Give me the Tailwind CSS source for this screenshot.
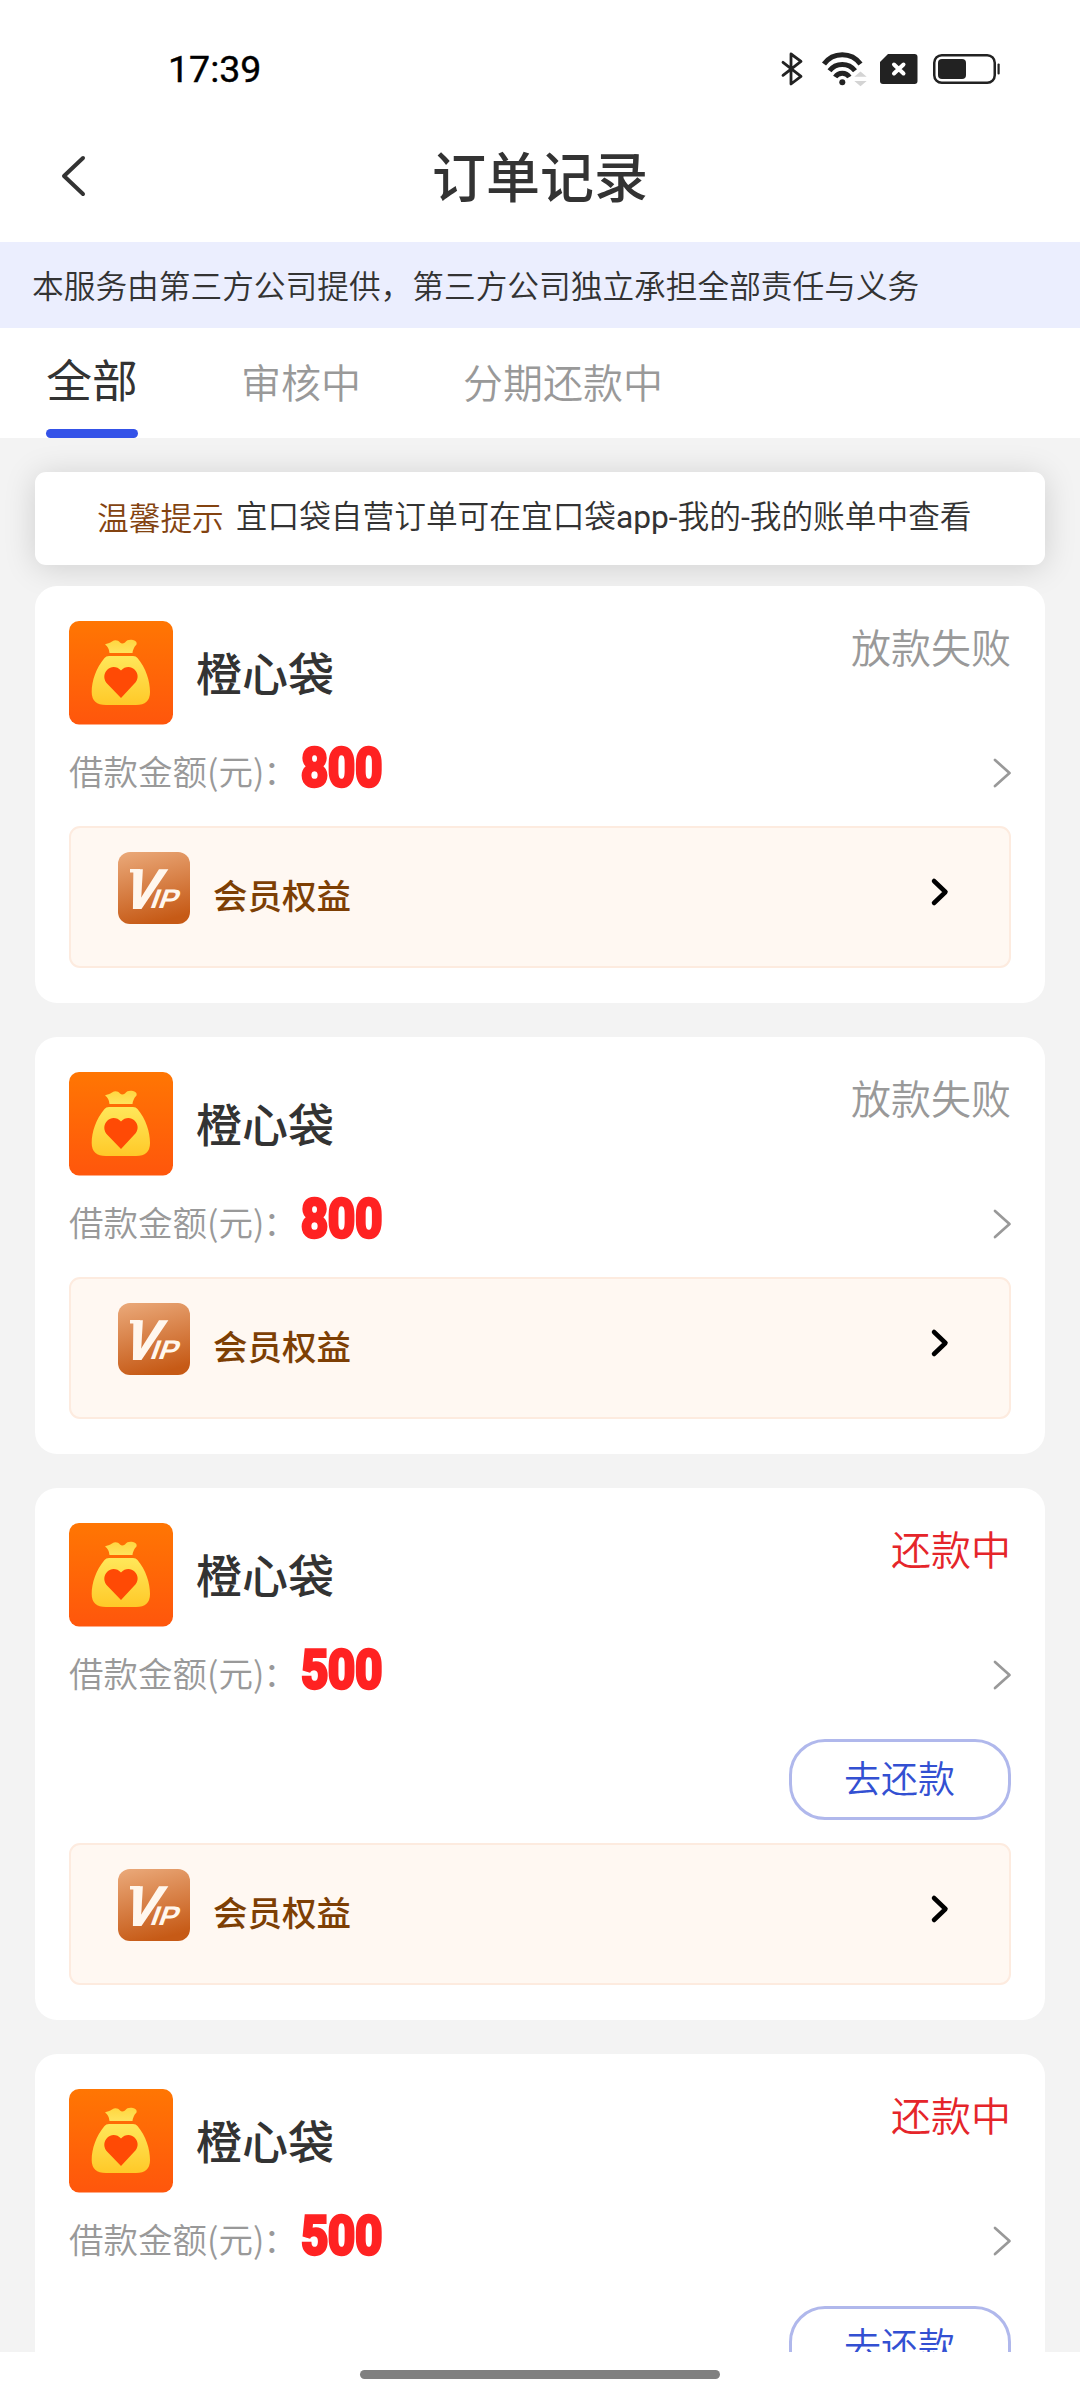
<!DOCTYPE html>
<html lang="zh-CN">
<head>
<meta charset="utf-8">
<title>订单记录</title>
<script src="https://cdn.jsdelivr.net/npm/@tailwindcss/browser@4"></script>
</head>
<body class="bg-white">
<svg class="absolute w-0 h-0" aria-hidden="true">
  <defs>
    <linearGradient id="bg-app" x1="0" y1="0" x2="0" y2="1"><stop offset="0" stop-color="#ff7603"/><stop offset="1" stop-color="#ff560c"/></linearGradient>
    <linearGradient id="bg-bag" x1="0" y1="0" x2="0" y2="1"><stop offset="0" stop-color="#ffe75a"/><stop offset="1" stop-color="#ffc928"/></linearGradient>
    <linearGradient id="bg-knot" x1="0" y1="0" x2="0" y2="1"><stop offset="0" stop-color="#ffd640"/><stop offset="1" stop-color="#ffe35c"/></linearGradient>
    <linearGradient id="bg-vip" x1="0.2" y1="0" x2="0.45" y2="1"><stop offset="0" stop-color="#e9a676"/><stop offset="1" stop-color="#c65a16"/></linearGradient>
    <symbol id="bag" viewBox="0 0 104 104">
      <rect width="104" height="103.500" rx="10" fill="url(#bg-app)"/>
      <path d="M36 23.5C38 22.5 41 22 43 20.5C46 18.500 49 19 51 21.500Q53 23.500 56 21.500C58 18.500 61 18.500 64 19Q68.500 20 67.500 23.500Q64 27 63.500 32H40.500Q40 26 36 23.5Z" fill="url(#bg-knot)"/>
      <path d="M40 35H64Q67 35 68.500 37C77 47 81 60 81 71Q81 84 67 84H37Q22.700 84 22.700 71C22.700 60 27 47 35.500 37Q37 35 40 35Z" fill="url(#bg-bag)"/>
      <path d="M52 49.500C48 45 42 45 38.500 48.500C34 53 34.500 59 38.500 63L52 77L65 63C69.500 59 70 53 65.500 48.500C62 45 56 45 52 49.500Z" fill="#ff4a05"/>
    </symbol>
    <symbol id="vip" viewBox="0 0 72 72">
      <rect width="72" height="72" rx="12" fill="url(#bg-vip)"/>
      <path d="M12 17H22V20.500H12Z" fill="#fff7ee"/>
      <g font-family="Liberation Sans" font-weight="700" fill="#fff7ee">
        <text transform="translate(3 55.500) skewX(-19)" font-size="55" textLength="33" lengthAdjust="spacingAndGlyphs" stroke="#fff7ee" stroke-width="2">V</text>
        <text transform="translate(31 55.500) skewX(-20)" font-size="27" textLength="27" lengthAdjust="spacingAndGlyphs">IP</text>
      </g>
    </symbol>
    <symbol id="next" viewBox="0 0 20 32"><path d="M3 3L17.500 16L3 29" fill="none" stroke="#999" stroke-width="2.700" stroke-linecap="round" stroke-linejoin="round"/></symbol>
    <symbol id="next-bold" viewBox="0 0 20 32"><path d="M4 5L15.500 16L4 27" fill="none" stroke="#000" stroke-width="4.500" stroke-linecap="round" stroke-linejoin="round"/></symbol>
  </defs>
</svg>
<div class="w-[1080px] h-[2400px] flex flex-col overflow-hidden bg-white text-[#333] font-['Noto_Sans_CJK_SC',sans-serif]">
  <div class="h-[138px] shrink-0 flex items-center justify-between pl-[168px] pr-[80px]">
    <div class="font-['Roboto',sans-serif] font-normal text-[37.500px] leading-none text-black pt-px [-webkit-text-stroke:0.400px_#000]">17:39</div>
    <div class="flex items-center">
      <svg class="w-[22px] h-[34px] mr-[17px]" viewBox="0 0 22 34" fill="none" stroke="#222" stroke-width="2.800" stroke-linejoin="round" stroke-linecap="round"><path d="M2 10.300L20 24.300L10 32V2L20 9.300L2 23.300"/></svg>
      <svg class="w-[48px] h-[36px] mr-[12px]" viewBox="0 0 48 36" fill="none" stroke="#222" stroke-width="5"><path d="M4 13A22.500 22.500 0 0 1 40.500 13M9.500 19.800A16 16 0 0 1 35 19.800M15.200 26A8.500 8.500 0 0 1 29.400 26"/><circle cx="22.300" cy="31.300" r="3" fill="#222" stroke="none"/><path d="M34.300 25.700H46.700L40.500 20.500ZM34.300 30H46.700L40.500 35.200Z" fill="#d4d4d4" stroke="none"/></svg>
      <svg class="w-[38px] h-[30px] mr-[15px]" viewBox="0 0 38 30"><path d="M8 0H34.500Q37.500 0 37.500 3V27Q37.500 30 34.500 30H3Q0 30 0 27V8Z" fill="#222"/><path d="M14 10.500L23.500 19.500M23.500 10.500L14 19.500" stroke="#fff" stroke-width="4" stroke-linecap="round"/></svg>
      <svg class="w-[67px] h-[30px]" viewBox="0 0 67 30"><rect x="1.250" y="1.250" width="60.500" height="27.500" rx="7.500" fill="none" stroke="#222" stroke-width="2.500"/><rect x="5" y="5" width="28" height="20" rx="4" fill="#222"/><rect x="64.500" y="9.500" width="2.200" height="11" rx="1" fill="#222"/></svg>
    </div>
  </div>
  <div class="h-[104px] shrink-0 flex items-start justify-center">
    <div class="w-full h-[72px] grid grid-cols-[1fr_auto_1fr] items-center">
      <svg class="w-[28px] h-[46px] ml-[59px] mt-[3px]" viewBox="0 0 28 46"><path d="M24 5L5 23L24 41" fill="none" stroke="#333" stroke-width="4" stroke-linecap="round" stroke-linejoin="round"/></svg>
      <h1 class="text-[54px] leading-[72px] font-medium pt-px">订单记录</h1>
      <div></div>
    </div>
  </div>
  <div class="h-[86px] shrink-0 flex items-center pl-[32px] bg-[#ebeefe] text-[31.700px] leading-none font-[350]">本服务由第三方公司提供，第三方公司独立承担全部责任与义务</div>
  <div class="h-[110px] shrink-0 flex pl-[46px] leading-[100px] text-[40px] text-[#999] font-[350]">
    <div class="w-[92px] flex flex-col items-center text-[45.700px] text-[#333] font-normal">
      <span class="h-[101px] whitespace-nowrap">全部</span>
      <span class="w-full h-[9px] rounded-full bg-[#3452e8]"></span>
    </div>
    <div class="ml-[103px] pt-[3px] whitespace-nowrap">审核中</div>
    <div class="ml-[102px] pt-[3px] whitespace-nowrap">分期还款中</div>
  </div>
  <main class="h-[1914px] shrink-0 overflow-hidden bg-[#f3f3f3] px-[35px] pt-[34px] flex flex-col">
    <div class="h-[93px] shrink-0 rounded-[11px] bg-white shadow-[0_3px_32px_rgba(0,0,0,0.150)] flex items-center pl-[62px] pb-[4px] text-[31.700px] leading-none whitespace-nowrap font-[350]"><span class="text-[#834310]">温馨提示</span><span class="ml-[12px]">宜口袋自营订单可在宜口袋<span class="font-['Roboto',sans-serif] font-normal">app-</span>我的<span class="font-['Roboto',sans-serif] font-normal">-</span>我的账单中查看</span></div>
    <div class="relative mt-[21px] flex flex-col gap-[34px]">
      <section class="h-[417px] rounded-[22px] bg-white px-[34px] pt-[35px] flex flex-col">
        <div class="h-[104px] flex"><svg class="w-[104px] h-[104px]"><use href="#bag"/></svg><span class="ml-[23px] leading-[100px] text-[46px] font-medium">橙心袋</span><span class="ml-auto leading-[51px] text-[40px] text-[#999] font-[350]">放款失败</span></div>
        <div class="h-[101px] flex text-[34.500px] text-[#999] font-[350]"><span class="leading-[91px]">借款金额(元)<span class="-ml-[1px]">：</span></span><span class="w-[90px] ml-[3px] leading-[86px] text-[53px] font-bold text-[#ff2222] font-['Roboto',sans-serif] [-webkit-text-stroke:3.500px_#ff2222] origin-left scale-x-[0.890]">800</span><svg class="ml-auto mt-[32px] -mr-[1px] w-[20px] h-[32px]"><use href="#next"/></svg></div>
        <div class="h-[142px] rounded-[11px] border-2 border-[#fdebdf] bg-[#fff8f2] pl-[47px] pr-[59px] pt-[24px] flex"><svg class="w-[72px] h-[72px]"><use href="#vip"/></svg><span class="ml-[23px] leading-[85px] text-[34.500px] font-medium text-[#7d3f04]">会员权益</span><svg class="ml-auto mt-[24px] w-[20px] h-[32px]"><use href="#next-bold"/></svg></div>
      </section>
      <section class="h-[417px] rounded-[22px] bg-white px-[34px] pt-[35px] flex flex-col">
        <div class="h-[104px] flex"><svg class="w-[104px] h-[104px]"><use href="#bag"/></svg><span class="ml-[23px] leading-[100px] text-[46px] font-medium">橙心袋</span><span class="ml-auto leading-[51px] text-[40px] text-[#999] font-[350]">放款失败</span></div>
        <div class="h-[101px] flex text-[34.500px] text-[#999] font-[350]"><span class="leading-[91px]">借款金额(元)<span class="-ml-[1px]">：</span></span><span class="w-[90px] ml-[3px] leading-[86px] text-[53px] font-bold text-[#ff2222] font-['Roboto',sans-serif] [-webkit-text-stroke:3.500px_#ff2222] origin-left scale-x-[0.890]">800</span><svg class="ml-auto mt-[32px] -mr-[1px] w-[20px] h-[32px]"><use href="#next"/></svg></div>
        <div class="h-[142px] rounded-[11px] border-2 border-[#fdebdf] bg-[#fff8f2] pl-[47px] pr-[59px] pt-[24px] flex"><svg class="w-[72px] h-[72px]"><use href="#vip"/></svg><span class="ml-[23px] leading-[85px] text-[34.500px] font-medium text-[#7d3f04]">会员权益</span><svg class="ml-auto mt-[24px] w-[20px] h-[32px]"><use href="#next-bold"/></svg></div>
      </section>
      <section class="h-[532px] rounded-[22px] bg-white px-[34px] pt-[35px] flex flex-col">
        <div class="h-[104px] flex"><svg class="w-[104px] h-[104px]"><use href="#bag"/></svg><span class="ml-[23px] leading-[100px] text-[46px] font-medium">橙心袋</span><span class="ml-auto leading-[51px] text-[40px] text-[#e5252a] font-[350]">还款中</span></div>
        <div class="h-[101px] flex text-[34.500px] text-[#999] font-[350]"><span class="leading-[91px]">借款金额(元)<span class="-ml-[1px]">：</span></span><span class="w-[90px] ml-[3px] leading-[86px] text-[53px] font-bold text-[#ff2222] font-['Roboto',sans-serif] [-webkit-text-stroke:3.500px_#ff2222] origin-left scale-x-[0.890]">500</span><svg class="ml-auto mt-[32px] -mr-[1px] w-[20px] h-[32px]"><use href="#next"/></svg></div>
        <div class="mt-[11px] mb-[23px] h-[81px] w-[222px] self-end rounded-[36px] border-[3px] border-[#b0b8ec] pr-px text-center leading-[70px] text-[37px] text-[#3350d2] font-[350]">去还款</div>
        <div class="h-[142px] rounded-[11px] border-2 border-[#fdebdf] bg-[#fff8f2] pl-[47px] pr-[59px] pt-[24px] flex"><svg class="w-[72px] h-[72px]"><use href="#vip"/></svg><span class="ml-[23px] leading-[85px] text-[34.500px] font-medium text-[#7d3f04]">会员权益</span><svg class="ml-auto mt-[24px] w-[20px] h-[32px]"><use href="#next-bold"/></svg></div>
      </section>
      <section class="h-[532px] rounded-[22px] bg-white px-[34px] pt-[35px] flex flex-col">
        <div class="h-[104px] flex"><svg class="w-[104px] h-[104px]"><use href="#bag"/></svg><span class="ml-[23px] leading-[100px] text-[46px] font-medium">橙心袋</span><span class="ml-auto leading-[51px] text-[40px] text-[#e5252a] font-[350]">还款中</span></div>
        <div class="h-[101px] flex text-[34.500px] text-[#999] font-[350]"><span class="leading-[91px]">借款金额(元)<span class="-ml-[1px]">：</span></span><span class="w-[90px] ml-[3px] leading-[86px] text-[53px] font-bold text-[#ff2222] font-['Roboto',sans-serif] [-webkit-text-stroke:3.500px_#ff2222] origin-left scale-x-[0.890]">500</span><svg class="ml-auto mt-[32px] -mr-[1px] w-[20px] h-[32px]"><use href="#next"/></svg></div>
        <div class="mt-[12px] h-[81px] w-[222px] self-end rounded-[36px] border-[3px] border-[#b0b8ec] pr-px text-center leading-[70px] text-[37px] text-[#3350d2] font-[350]">去还款</div>
      </section>
    </div>
  </main>
  <div class="h-[48px] shrink-0 flex justify-center pt-[18px]"><div class="w-[360px] h-[9px] rounded-full bg-[#808080]"></div></div>
</div>
</body>
</html>
